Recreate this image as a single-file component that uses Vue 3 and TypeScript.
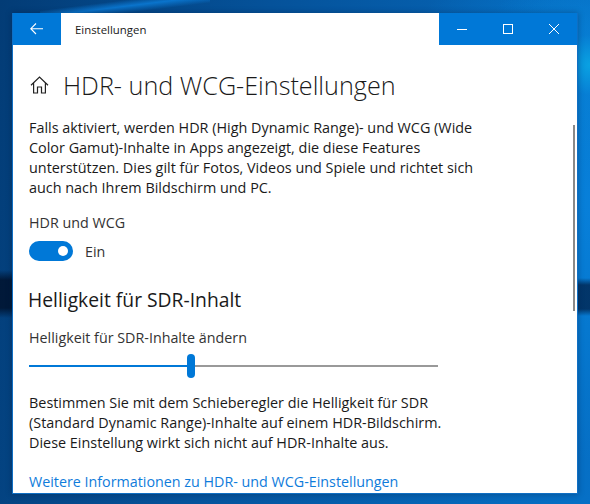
<script setup lang="ts">
const intro = [
  "Falls aktiviert, werden HDR (High Dynamic Range)- und WCG (Wide",
  "Color Gamut)-Inhalte in Apps angezeigt, die diese Features",
  "unterstützen. Dies gilt für Fotos, Videos und Spiele und richtet sich",
  "auch nach Ihrem Bildschirm und PC.",
];
const note = [
  "Bestimmen Sie mit dem Schieberegler die Helligkeit für SDR",
  "(Standard Dynamic Range)-Inhalte auf einem HDR-Bildschirm.",
  "Diese Einstellung wirkt sich nicht auf HDR-Inhalte aus.",
];
const sliderValue = 38.6;
</script>

<template>
  <div class="desktop">
    <div class="window">
      <header class="titlebar">
        <button class="back" aria-label="Zurück">
          <svg width="14" height="12" viewBox="0 0 14 12">
            <path d="M6 .5 .8 5.7 6 11M.8 5.7H13" fill="none" stroke="#fff" stroke-width="1.1" />
          </svg>
        </button>
        <span class="app-name">Einstellungen</span>
        <div class="controls">
          <span class="ctl">
            <svg width="10" height="10" viewBox="0 0 10 10"><path d="M0 5.5H10" stroke="#fff" fill="none" /></svg>
          </span>
          <span class="ctl">
            <svg width="10" height="10" viewBox="0 0 10 10"><rect x=".5" y=".5" width="9" height="9" stroke="#fff" fill="none" /></svg>
          </span>
          <span class="ctl">
            <svg width="10" height="10" viewBox="0 0 10 10"><path d="M0 0 10 10M10 0 0 10" stroke="#fff" fill="none" /></svg>
          </span>
        </div>
      </header>

      <main class="content">
        <div class="page-head">
          <svg class="home" width="19" height="18" viewBox="0 0 19 18">
            <path d="M1 9.2 9.5 1 18 9.2M3.6 7V17H7.5V11H11.5V17H15.4V7" fill="none" stroke="#222" stroke-width="1.2" />
          </svg>
          <h1>HDR- und WCG-Einstellungen</h1>
        </div>

        <p class="intro">
          <span v-for="line in intro" :key="line" class="line">{{ line }}</span>
        </p>

        <div class="field-label">HDR und WCG</div>
        <div class="toggle-row">
          <span class="toggle"><span class="knob"></span></span>
          <span>Ein</span>
        </div>

        <h2>Helligkeit für SDR-Inhalt</h2>

        <div class="slider-label">Helligkeit für SDR-Inhalte ändern</div>
        <div class="slider">
          <span class="fill" :style="{ width: sliderValue + '%' }"></span>
          <span class="thumb"></span>
          <span class="rest"></span>
        </div>

        <p class="note">
          <span v-for="line in note" :key="line" class="line">{{ line }}</span>
        </p>

        <a class="more" href="#">Weitere Informationen zu HDR- und WCG-Einstellungen</a>
      </main>

      <div class="scrollbar"></div>
    </div>
  </div>
</template>

<style>
html,
body {
  margin: 0;
  overflow: hidden;
}
</style>

<style scoped>
.desktop {
  width: 590px;
  height: 504px;
  box-sizing: border-box;
  padding: 13px 12px 10px 12px;
  font-family: "Open Sans", "Noto Sans", sans-serif;
  color: #1a1a1a;
  background:
    linear-gradient(180deg, transparent 270px, rgba(0, 15, 40, 0.8) 280px, rgba(0, 15, 40, 0.8) 308px, transparent 318px) left top / 12px 100% no-repeat,
    linear-gradient(180deg, transparent 278px, rgba(2, 50, 100, 0.95) 285px, rgba(2, 50, 100, 0.95) 309px, transparent 316px) right top / 12px 100% no-repeat,
    linear-gradient(173deg, transparent 30%, #0a74cc 48%, transparent 68%) 40px 0 / 170px 14px no-repeat,
    radial-gradient(circle at 590px 65px, #0aa2e2 0, rgba(8, 130, 215, 0.6) 30px, transparent 110px),
    radial-gradient(circle at 600px 200px, #0880da 0, #0678cf 130px, transparent 260px),
    linear-gradient(100deg, #033c76 0, #05529a 40%, #0670c6 100%);
}
.window {
  position: relative;
  width: 566px;
  height: 481px;
  box-sizing: border-box;
  display: flex;
  flex-direction: column;
  background: #fff;
  border: 1px solid #0f6fc4;
  border-top: 0;
  box-shadow: 0 0 6px rgba(0, 20, 50, 0.35);
  overflow: hidden;
}
.titlebar {
  display: flex;
  align-items: center;
  height: 32px;
  flex: none;
  font-size: 11.4px;
}
.back {
  width: 48px;
  height: 32px;
  border: 0;
  padding: 0;
  background: #0078d7;
  display: flex;
  align-items: center;
  justify-content: center;
}
.app-name {
  margin-left: 14px;
  flex: 1;
}
.controls {
  display: flex;
  background: #0078d7;
}
.ctl {
  width: 46px;
  height: 32px;
  display: flex;
  align-items: center;
  justify-content: center;
}
.content {
  padding: 0 16px;
}
.page-head {
  display: flex;
  align-items: center;
  gap: 14px;
  margin-top: 21px;
  height: 38px;
  padding-left: 1px;
}
h1 {
  margin: 0;
  font-size: 25.2px;
  font-weight: 300;
  white-space: nowrap;
}
.intro,
.note {
  margin: 0;
  font-size: 14.4px;
  line-height: 20px;
}
.line {
  display: block;
  white-space: nowrap;
}
.intro {
  margin-top: 14px;
}
.field-label {
  margin-top: 15px;
  font-size: 14.3px;
  line-height: 20px;
  color: #333;
}
.toggle-row {
  display: flex;
  align-items: center;
  gap: 12px;
  height: 20px;
  margin-top: 8px;
  font-size: 14.3px;
  color: #333;
}
.toggle {
  width: 44px;
  height: 20px;
  border-radius: 10px;
  background: #0078d7;
  display: flex;
  align-items: center;
  justify-content: flex-end;
  padding-right: 5px;
  box-sizing: border-box;
}
.knob {
  width: 10px;
  height: 10px;
  border-radius: 50%;
  background: #fff;
}
h2 {
  margin: 26px 0 0 -1px;
  font-size: 19.3px;
  line-height: 26px;
  font-weight: 400;
}
.slider-label {
  margin-top: 15px;
  font-size: 14.3px;
  line-height: 20px;
  color: #333;
}
.slider {
  display: flex;
  align-items: center;
  width: 409px;
  height: 24px;
  margin-top: 6px;
}
.fill {
  height: 2px;
  background: #0078d7;
  flex: none;
}
.thumb {
  width: 8px;
  height: 24px;
  border-radius: 4px;
  background: #0078d7;
  flex: none;
}
.rest {
  height: 2px;
  flex: 1;
  background: #999;
}
.note {
  margin-top: 15px;
}
.more {
  display: block;
  margin-top: 19px;
  font-size: 14.3px;
  line-height: 20px;
  color: #0f7cdb;
  text-decoration: none;
  white-space: nowrap;
}
.scrollbar {
  position: absolute;
  right: 2px;
  top: 112px;
  width: 2px;
  height: 186px;
  background: #8a8a8a;
}
</style>
